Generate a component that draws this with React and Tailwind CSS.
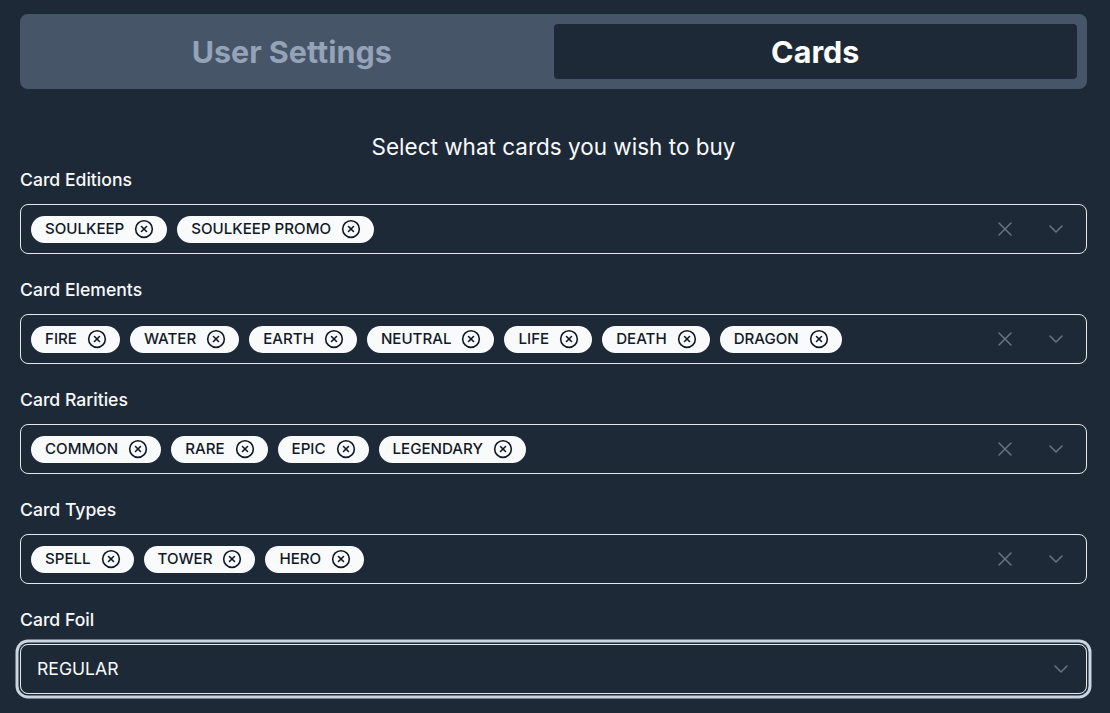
import React from 'react';
import { ChevronDown, CircleX, X } from 'lucide-react';

const groups = [
    { label: 'Card Editions', values: ['SOULKEEP', 'SOULKEEP PROMO'] },
    { label: 'Card Elements', values: ['FIRE', 'WATER', 'EARTH', 'NEUTRAL', 'LIFE', 'DEATH', 'DRAGON'] },
    { label: 'Card Rarities', values: ['COMMON', 'RARE', 'EPIC', 'LEGENDARY'] },
    { label: 'Card Types', values: ['SPELL', 'TOWER', 'HERO'] },
];

function Chip({ value }) {
    return (
        <div className="flex h-[27px] items-center gap-[10px] rounded-full bg-[#f9fafb] pl-[14px] pr-[13px] text-[15.1px] font-medium text-[#111827]">
            <span>{value}</span>
            <CircleX className="h-5 w-5" strokeWidth={1.9} />
        </div>
    );
}

function MultiSelect({ label, values }) {
    return (
        <div>
            <div className="h-[24px] text-[17.6px] font-medium leading-6 text-[#f9fafb]">{label}</div>
            <div className="mt-[12px] flex h-[50px] items-center rounded-lg border border-[#e5e7eb] pl-[10px] pr-[18px]">
                <div className="flex flex-1 gap-[10px]">
                    {values.map((v) => (
                        <Chip key={v} value={v} />
                    ))}
                </div>
                <X className="h-6 w-6 text-[#6b7280]" strokeWidth={1.5} />
                <ChevronDown className="ml-[27px] h-6 w-6 text-[#6b7280]" strokeWidth={1.5} />
            </div>
        </div>
    );
}

export default function App() {
    return (
        <div className="h-[713px] overflow-hidden bg-[#1e2937] pl-5 pr-[23px] pt-[14px] font-['Inter',sans-serif]">
            <div className="flex h-[75px] rounded-lg bg-[#475569] p-[10px]">
                <div className="flex flex-1 items-center justify-center text-[30.5px] font-bold text-[#94a3b8]">User Settings</div>
                <div className="flex flex-1 items-center justify-center rounded bg-[#1e2937] text-[30.5px] font-bold text-white">Cards</div>
            </div>

            <div className="mb-[5px] mt-[42px] h-[32px] text-center text-[22.5px] leading-8 text-[#f9fafb]">Select what cards you wish to buy</div>

            <div className="flex flex-col gap-[24px]">
                {groups.map((g) => (
                    <MultiSelect key={g.label} label={g.label} values={g.values} />
                ))}
                <div>
                    <div className="h-[24px] text-[17.6px] font-medium leading-6 text-[#f9fafb]">Card Foil</div>
                    <div className="mt-[12px] flex h-[50px] items-center rounded-lg border border-[#e5e7eb] pl-4 pr-[13px] text-[17.6px] text-[#f9fafb] ring-[3px] ring-[#cbd5e1] ring-offset-[1.5px] ring-offset-[#1e2937]">
                        <span className="flex-1">REGULAR</span>
                        <ChevronDown className="h-6 w-6 text-[#6b7280]" strokeWidth={1.5} />
                    </div>
                </div>
            </div>
        </div>
    );
}
